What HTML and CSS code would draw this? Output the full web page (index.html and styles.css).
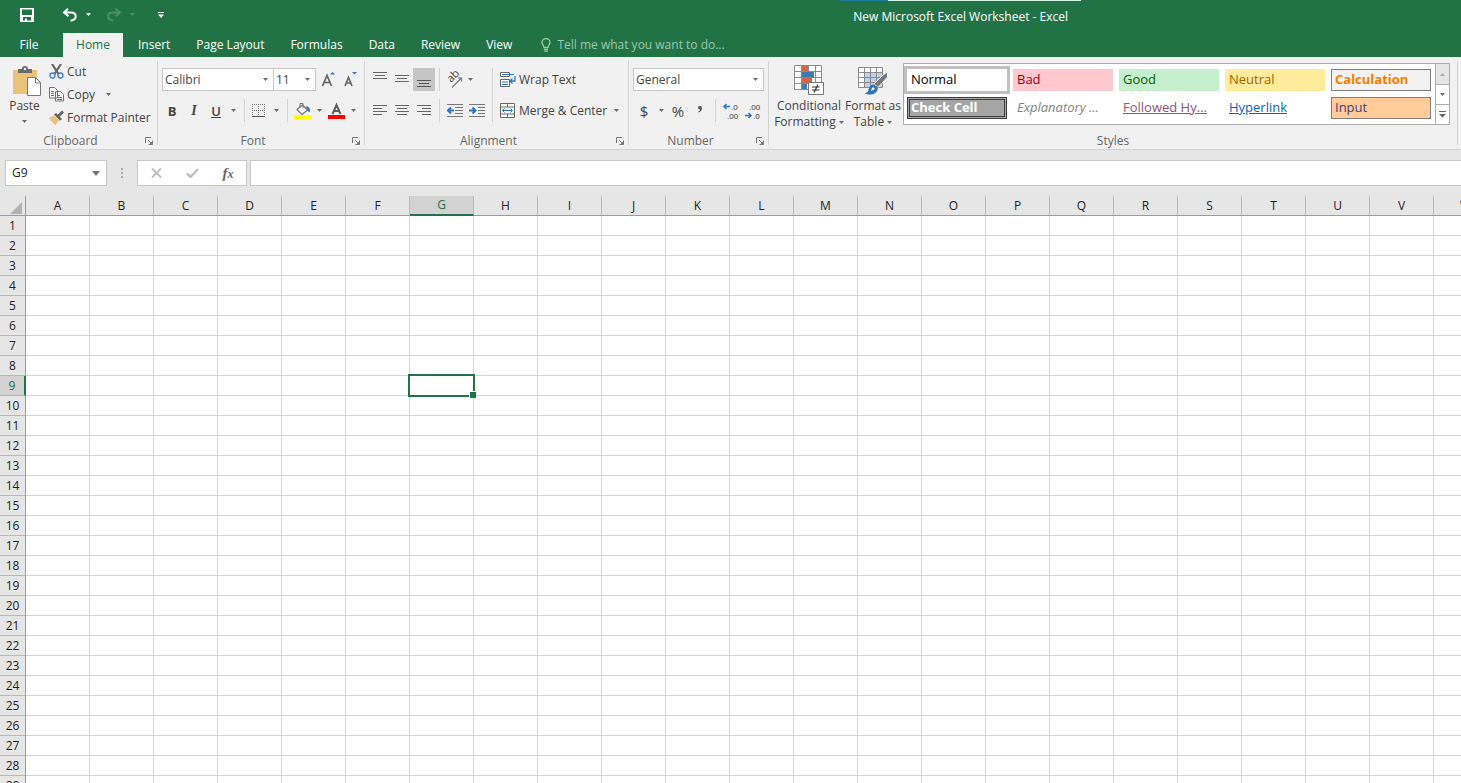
FILE: index.html
```html
<!DOCTYPE html>
<html lang="en">
<head>
<meta charset="utf-8">
<title>New Microsoft Excel Worksheet - Excel</title>
<link rel="stylesheet" href="styles.css">
</head>
<body>
<svg class="defs" aria-hidden="true">
  <symbol id="caret" viewBox="0 0 5 3"><path d="M0 0h5L2.500 3z" fill="currentColor"/></symbol>
  <symbol id="launch" viewBox="0 0 8 8"><path d="M.5 6V.5H6M3 3l4 4M7.500 3.500v4h-4" fill="none" stroke="currentColor"/><path d="M7.500 4v3.500H4z" fill="currentColor"/></symbol>
</svg>

<header class="titlebar">
  <div class="quick">
    <button class="q-save" aria-label="Save"><svg width="14" height="14" viewBox="0 0 14 14"><path fill="#fff" fill-rule="evenodd" d="M0 0h14v14H0zM2 1.500V7h10V1.500zM3 9v3.500h2V10.500h2v2h4V9z"/></svg></button>
    <button class="q-undo" aria-label="Undo"><svg width="16" height="14" viewBox="0 0 16 14"><path d="M6 .8 2 4.500l4.500 3.700M2.500 4.500H9c3 0 4.700 1.700 4.700 4S12 12.200 8.500 12.700" fill="none" stroke="#fff" stroke-width="2"/></svg></button>
    <button class="q-arrow" aria-label="Undo history"><svg width="5" height="3"><use href="#caret"/></svg></button>
    <button class="q-redo" aria-label="Redo" disabled><svg width="16" height="14" viewBox="0 0 16 14"><path d="M9.500.8 14 4.500 9.500 8.200M13.500 4.500H7c-3 0-4.700 1.700-4.700 4s1.700 3.700 5 4.200" fill="none" stroke="currentColor" stroke-width="2"/></svg></button>
    <button class="q-arrow q-dim" aria-label="Redo history" disabled><svg width="5" height="3"><use href="#caret"/></svg></button>
    <button class="q-more" aria-label="Customize toolbar"><svg width="6" height="6" viewBox="0 0 6 6"><path d="M0 0h6v1H0zM0 2.500h6L3 6z" fill="#fff"/></svg></button>
  </div>
  <h1 class="doc-title">New Microsoft Excel Worksheet - Excel</h1>
</header>

<nav class="tabs">
  <button class="tab tab-file">File</button>
  <button class="tab tab-active">Home</button>
  <button class="tab">Insert</button>
  <button class="tab">Page Layout</button>
  <button class="tab">Formulas</button>
  <button class="tab">Data</button>
  <button class="tab">Review</button>
  <button class="tab">View</button>
  <label class="tell">
    <svg width="10" height="14" viewBox="0 0 10 14"><path d="M3 9.500C3 7.500 1 6.800 1 4.500a4 4 0 0 1 8 0C9 6.800 7 7.500 7 9.500zM3 11.500h4M3.500 13.300h3" fill="none" stroke="currentColor" stroke-width="1.300"/></svg>
    <input type="text" placeholder="Tell me what you want to do..." aria-label="Tell me what you want to do">
  </label>
</nav>

<main class="ribbon">
  <section class="group g-clip">
    <div class="body">
      <button class="paste">
        <svg width="30" height="32" viewBox="0 0 30 32"><path d="M1 4h24v24H1z" fill="#eac27c"/><path d="M6 7V3h4a3 3 0 0 1 6 0h4v4z" fill="#6a6a6a"/><circle cx="13" cy="3" r="1.200" fill="#f1f1f1"/><path d="M15.500 11.500h8l5 5v13h-13z" fill="#fff" stroke="#777"/><path d="M23.500 11.500v5.500H28.500" fill="none" stroke="#777"/></svg>
        <span>Paste</span>
        <svg class="car" width="5" height="3"><use href="#caret"/></svg>
      </button>
      <div class="stack">
        <button class="cmd"><svg width="15" height="15" viewBox="0 0 15 15"><path d="M3 0l6.500 10M12 0L5.500 10" stroke="#666" stroke-width="2.200"/><g fill="#f1f1f1" stroke="#3f7fc4" stroke-width="1.300"><circle cx="3.500" cy="11.500" r="2.500"/><circle cx="11.500" cy="11.500" r="2.500"/></g></svg>Cut</button>
        <div class="pair"><button class="cmd"><svg width="15" height="15" viewBox="0 0 15 15"><g fill="#fff" stroke="#707070"><path d="M.5.5h5l3 3v7.500h-8zM6.500 4.500h5l3 3V14h-8z"/></g><path d="M2 4.500h3M2 6.500h3M2 8.500h3M8 8.500h3M8 10.500h5M8 12.500h5" stroke="#3c78a8"/></svg>Copy</button><button class="dd" aria-label="Copy options"><svg width="5" height="3"><use href="#caret"/></svg></button></div>
        <button class="cmd"><svg width="15" height="15" viewBox="0 0 15 15"><path d="M0 8l5-2.500 5 5L6.500 15C4 13.500 2 11 0 8z" fill="#eac27c"/><path d="M5 4.500 7 3l6 6-2 1.800z" fill="#666"/><path d="M9 6.500 14 1.500" stroke="#666" stroke-width="3"/></svg>Format Painter</button>
      </div>
    </div>
    <footer><span>Clipboard</span><button aria-label="Clipboard settings"><svg width="8" height="8"><use href="#launch"/></svg></button></footer>
  </section>

  <section class="group g-font">
    <div class="body col">
      <div class="row">
        <label class="combo c-face"><select aria-label="Font"><option>Calibri</option></select><svg width="5" height="3"><use href="#caret"/></svg></label>
        <label class="combo c-size"><select aria-label="Font size"><option>11</option></select><svg width="5" height="3"><use href="#caret"/></svg></label>
        <button class="ib grow" aria-label="Increase font size"><svg width="16" height="18" viewBox="0 0 16 18"><path d="M1.500 15 6 4.500 10.500 15M3 11.500h6" fill="none" stroke="#666" stroke-width="1.700"/><path d="M9 3.500h5L11.500 1z" fill="#2f75b5"/></svg></button>
        <button class="ib" aria-label="Decrease font size"><svg width="16" height="18" viewBox="0 0 16 18"><path d="M2 15l3.500-8.500L9 15M3.500 12h4.500" fill="none" stroke="#666" stroke-width="1.700"/><path d="M9 1h5l-2.500 2.500z" fill="#2f75b5"/></svg></button>
      </div>
      <div class="row">
        <button class="ib t-bold">B</button><button class="ib t-ital">I</button><button class="ib t-under">U</button><button class="dd" aria-label="Underline options"><svg width="5" height="3"><use href="#caret"/></svg></button>
        <i class="sep"></i>
        <button class="ib" aria-label="Borders"><svg width="14" height="14" viewBox="0 0 14 14"><path d="M.5 0v12M6.500 0v12M12.500 0v12M0 .5h14M0 6.500h14" stroke="#777" stroke-dasharray="1 1"/><path d="M0 12.500h13" stroke="#555"/></svg></button><button class="dd" aria-label="Border options"><svg width="5" height="3"><use href="#caret"/></svg></button>
        <i class="sep"></i>
        <button class="ib" aria-label="Fill color"><svg width="17" height="17" viewBox="0 0 17 17"><path d="M3 7.500 8.500 3l5 5-5.500 4.500z" fill="#fff" stroke="#707070" stroke-width="1.200"/><path d="M6 6V1.500h3V6" fill="none" stroke="#707070"/><path d="M11.500 4.500c3-.5 5 1.500 4.500 5.500l-2-.5-.5-2z" fill="#3c78b4"/><path d="M0 13h17v4H0z" fill="#ff0"/></svg></button><button class="dd" aria-label="Fill options"><svg width="5" height="3"><use href="#caret"/></svg></button>
        <button class="ib" aria-label="Font color"><svg width="17" height="17" viewBox="0 0 17 17"><path d="M4.500 12 8.500 3l4 9M6 9h5" fill="none" stroke="#5c5c5c" stroke-width="2"/><path d="M0 13h17v4H0z" fill="#f00"/></svg></button><button class="dd" aria-label="Font color options"><svg width="5" height="3"><use href="#caret"/></svg></button>
      </div>
    </div>
    <footer><span>Font</span><button aria-label="Font settings"><svg width="8" height="8"><use href="#launch"/></svg></button></footer>
  </section>

  <section class="group g-align">
    <div class="body">
      <div class="col">
        <div class="row">
          <button class="ib" aria-label="Top align"><svg width="14" height="16" viewBox="0 0 14 16"><path d="M0 .5h14M2 3.500h10M0 6.500h14" stroke="#666"/></svg></button><button class="ib" aria-label="Middle align"><svg width="14" height="16" viewBox="0 0 14 16"><path d="M0 3.500h14M2 6.500h10M0 9.500h14" stroke="#666"/></svg></button><button class="ib on" aria-label="Bottom align"><svg width="14" height="16" viewBox="0 0 14 16"><path d="M0 8.500h14M2 11.500h10M0 14.500h14" stroke="#555"/></svg></button>
          <i class="sep"></i>
          <button class="ib" aria-label="Orientation"><svg class="orient" width="18" height="18" viewBox="0 0 18 18"><text transform="translate(5 12) rotate(-45)">ab</text><path d="M6 16.500 15.500 7M12 7h3.500v3.500" fill="none" stroke="#777" stroke-width="1.200"/></svg></button><button class="dd dd-orient" aria-label="Orientation options"><svg width="5" height="3"><use href="#caret"/></svg></button>
        </div>
        <div class="row">
          <button class="ib" aria-label="Align left"><svg width="14" height="11" viewBox="0 0 14 11"><path d="M0 .5h14M0 3.500h9M0 6.500h14M0 9.500h9" stroke="#666"/></svg></button><button class="ib" aria-label="Center"><svg width="14" height="11" viewBox="0 0 14 11"><path d="M0 .5h14M2 3.500h10M0 6.500h14M2 9.500h10" stroke="#666"/></svg></button><button class="ib" aria-label="Align right"><svg width="14" height="11" viewBox="0 0 14 11"><path d="M0 .5h14M5 3.500h9M0 6.500h14M5 9.500h9" stroke="#666"/></svg></button>
          <i class="sep"></i>
          <button class="ib" aria-label="Decrease indent"><svg width="16" height="13" viewBox="0 0 16 13"><path d="M0 .5h16M8 3.500h8M8 6.500h8M8 9.500h8M0 12.500h16" stroke="#777"/><path d="M7 6.500H1M4 3.500l-3 3 3 3" fill="none" stroke="#2f75b5" stroke-width="2"/></svg></button><button class="ib" aria-label="Increase indent"><svg width="16" height="13" viewBox="0 0 16 13"><path d="M0 .5h16M9 3.500h7M9 6.500h7M9 9.500h7M0 12.500h16" stroke="#777"/><path d="M0 6.500h6M3.500 3.500l3 3-3 3" fill="none" stroke="#2f75b5" stroke-width="2"/></svg></button>
        </div>
      </div>
      <i class="sep tall"></i>
      <div class="col">
        <div class="row"><button class="cmd"><svg width="16" height="16" viewBox="0 0 16 16"><path d="M.5.500h9v4h-9zM.5 7.500h9v7h-9z" fill="#fff" stroke="#666"/><path d="M2 2.500h12M2 10h6M2 12.500h6" stroke="#2f75b5"/><path d="M15 4v5h-4.500M12.500 6.500 10 9l2.500 2.500" fill="none" stroke="#2f75b5" stroke-width="1.300"/></svg>Wrap Text</button></div>
        <div class="row"><button class="cmd"><svg width="16" height="16" viewBox="0 0 16 16"><path d="M.5.5h14v14H.5zM.5 4h14M.5 11h14M7.500.5V4M7.500 11v3.500" fill="#fff" stroke="#666"/><path d="M2.500 7.500h10M4.500 5.500l-2 2 2 2M10.500 5.500l2 2-2 2" fill="none" stroke="#2f75b5"/></svg>Merge &amp; Center</button><button class="dd dd-merge" aria-label="Merge options"><svg width="5" height="3"><use href="#caret"/></svg></button></div>
      </div>
    </div>
    <footer><span>Alignment</span><button aria-label="Alignment settings"><svg width="8" height="8"><use href="#launch"/></svg></button></footer>
  </section>

  <section class="group g-num">
    <div class="body col">
      <div class="row"><label class="combo c-num"><select aria-label="Number format"><option>General</option></select><svg width="5" height="3"><use href="#caret"/></svg></label></div>
      <div class="row">
        <button class="ib t-sym">$</button><button class="dd" aria-label="Currency options"><svg width="5" height="3"><use href="#caret"/></svg></button><button class="ib t-sym">%</button><button class="ib" aria-label="Comma style"><svg width="6" height="11" viewBox="0 0 6 11"><path d="M3 1a2 2 0 0 1 2 2c0 2-1 3.500-3.500 4.500L1 7c1.500-1 2-1.500 2-2.500C.5 4.500.5 1 3 1z" fill="#555"/></svg></button>
        <i class="sep"></i>
        <button class="ib" aria-label="Increase decimal"><svg width="16" height="18" viewBox="0 0 16 18" class="dec"><text x="8" y="8">.0</text><text x="4" y="17">.00</text><path d="M7 4.500H1M3.500 2 1 4.500 3.500 7" fill="none" stroke="#2f75b5" stroke-width="1.500"/></svg></button><button class="ib" aria-label="Decrease decimal"><svg width="16" height="18" viewBox="0 0 16 18" class="dec"><text x="4" y="8">.00</text><text x="8" y="17">.0</text><path d="M0 13.500h6M3.500 11 6 13.500 3.500 16" fill="none" stroke="#2f75b5" stroke-width="1.500"/></svg></button>
      </div>
    </div>
    <footer><span>Number</span><button aria-label="Number settings"><svg width="8" height="8"><use href="#launch"/></svg></button></footer>
  </section>

  <section class="group g-style">
    <div class="body">
      <button class="big big-cond">
        <svg width="30" height="31" viewBox="0 0 30 31"><path d="M.5.5h27v24H.5z" fill="#fff"/><path d="M8 1h6v5H8zM8 13h10v5H8z" fill="#d4644a"/><path d="M8 7h12v5H8zM8 19h5v5H8z" fill="#3f7ab0"/><path d="M.5.500h27v24H.5zM7.500.5v24M21.500.5v24M.5 6.500h27M.5 12.500h27M.5 18.500h27M14.500.5v6" fill="none" stroke="#8a8a8a"/><path d="M14.500 17.500h15v12h-15z" fill="#fff" stroke="#777"/><path d="M18 22h7.500M18 25h7.500M24 19.500l-4 8" stroke="#333" stroke-width="1.200"/></svg>
        <span>Conditional<br>Formatting <svg width="5" height="3"><use href="#caret"/></svg></span>
      </button>
      <button class="big big-tab">
        <svg width="30" height="31" viewBox="0 0 30 31"><path d="M.5 2.500h24v20H.5z" fill="#fff"/><path d="M7 8h17.500v14.500H7z" fill="#bdd2ea"/><path d="M.5 2.500h24v20H.5zM6.500 2.500v20M12.500 2.500v20M18.500 2.500v20M.5 7.500h24M.5 12.500h24M.5 17.500h24" fill="none" stroke="#8a8a8a"/><path d="M29.500 7v5L20 22.500l-4-3.500 9-9z" fill="#777" stroke="#f1f1f1"/><path d="M16 19.500c-4 0-5 3-5.500 5.500-.5 2-2 3-4 3.500 5 2 13 1.500 13.500-6z" fill="#2f75b5"/><path d="M15 22c-1.500 1-1.500 3-2 4l4-2z" fill="#fff"/></svg>
        <span>Format as<br>Table <svg width="5" height="3"><use href="#caret"/></svg></span>
      </button>
      <div class="gallery">
        <div class="tiles">
          <button class="tile s-normal">Normal</button>
          <button class="tile s-bad">Bad</button>
          <button class="tile s-good">Good</button>
          <button class="tile s-neutral">Neutral</button>
          <button class="tile s-calc">Calculation</button>
          <button class="tile s-check">Check Cell</button>
          <button class="tile s-expl">Explanatory ...</button>
          <button class="tile s-fol">Followed Hy...</button>
          <button class="tile s-link">Hyperlink</button>
          <button class="tile s-input">Input</button>
        </div>
        <div class="scroll">
          <button class="s-up" aria-label="Scroll up" disabled><svg width="5" height="3" viewBox="0 0 5 3"><path d="M0 3h5L2.500 0z" fill="#aaa"/></svg></button>
          <button aria-label="Scroll down"><svg width="5" height="3"><use href="#caret"/></svg></button>
          <button aria-label="More styles"><svg width="7" height="7" viewBox="0 0 7 7"><path d="M0 0h7v1H0zM0 3h7L3.500 6.500z" fill="#666"/></svg></button>
        </div>
      </div>
    </div>
    <footer><span>Styles</span></footer>
  </section>
</main>

<div class="formula">
  <label class="name"><input type="text" value="G9" aria-label="Name box"><svg width="8" height="5" viewBox="0 0 8 5"><path d="M0 0h8L4 5z" fill="#777"/></svg></label>
  <svg class="grip" width="2" height="11" viewBox="0 0 2 11"><path d="M0 0h2v2H0zM0 4h2v2H0zM0 8h2v2H0z" fill="#aaa"/></svg>
  <div class="fx">
    <button aria-label="Cancel"><svg width="11" height="10" viewBox="0 0 11 10"><path d="M1 .5l9 9M10 .5l-9 9" stroke="#bcbcbc" stroke-width="1.800"/></svg></button>
    <button aria-label="Enter"><svg width="13" height="10" viewBox="0 0 13 10"><path d="M1 5.500 4.500 9 12 1" fill="none" stroke="#bcbcbc" stroke-width="2.300"/></svg></button>
    <button class="fn" aria-label="Insert function"><i>f</i><i class="fn-x">x</i></button>
  </div>
  <input class="bar" type="text" aria-label="Formula bar">
</div>

<div class="sheet">
  <table>
    <thead><tr id="cols"><th class="corner"><svg width="12" height="12" viewBox="0 0 12 12"><path d="M12 0v12H0z" fill="#b2b2b2"/></svg></th></tr></thead>
    <tbody id="rows"></tbody>
  </table>
</div>
<script src="sheet.js"></script>
</body>
</html>
```
FILE: styles.css
```css
* { box-sizing: border-box; }
html, body { height: 100%; }
body {
  margin: 0;
  display: flex;
  flex-direction: column;
  overflow: hidden;
  background: #e6e6e6;
  color: #444;
  font: 12px/16px "Open Sans", "Noto Sans", sans-serif;
}
button, input, select { font: inherit; color: inherit; margin: 0; padding: 0; border: 0; background: none; border-radius: 0; }
button { display: inline-flex; align-items: center; justify-content: center; white-space: nowrap; }
svg { display: block; flex: none; }
.defs { display: none; }
use { color: #6a6a6a; }

.titlebar { display: flex; height: 33px; flex: none; background: #217346; color: #fff; }
.quick { display: flex; align-items: center; height: 29px; padding-left: 20px; }
.q-undo { margin-left: 28px; }
.q-arrow { width: 20px; }
.q-arrow use, .q-more use { color: #fff; }
.q-redo { margin-left: 8px; color: #4c8f6b; }
.q-arrow.q-dim use { color: #4c8f6b; }
.q-more { margin-left: 16px; }
.doc-title {
  width: 241px;
  margin: 0 26% 0 auto;
  padding-top: 8px;
  border-top: 1px solid;
  border-image: linear-gradient(90deg, #1a7fa0 20%, #d5f5e4 20%) 1;
  font-size: 12px;
  font-weight: 400;
  line-height: 16px;
  text-align: center;
  white-space: nowrap;
}

.tabs { display: flex; flex: none; height: 24px; background: #217346; color: #fff; }
.tab { padding: 0 13px; }
.tab-file { width: 58px; margin-right: 5px; }
.tab-active { width: 60px; margin-right: 2px; padding: 0; background: #f1f1f1; color: #217346; }
.tell { display: flex; align-items: center; gap: 6px; margin-left: 16px; color: #9cc8ae; }
.tell input { width: 190px; outline: 0; }
.tell input::placeholder { color: #9cc8ae; opacity: 1; }

.ribbon { display: flex; flex: none; height: 93px; background: #f1f1f1; border-bottom: 1px solid #d2d2d2; }
.group { display: flex; flex-direction: column; flex: none; margin: 4px 0; border-right: 1px solid #d2d2d2; }
.g-clip { width: 158px; }
.g-font { width: 207px; }
.g-align { width: 264px; }
.g-num { width: 140px; }
.g-style { flex: 1 1 auto; margin-right: 3px; }
.body { display: flex; flex: 1; }
.col { display: flex; flex-direction: column; gap: 8px; padding-top: 7px; }
.row { display: flex; align-items: center; height: 23px; }
.group footer { display: flex; align-items: center; flex: none; height: 16px; margin-bottom: -4px; color: #666; }
.group footer span { flex: 1; text-align: center; }
.group footer button { width: 16px; height: 16px; }
.group footer use { color: #777; }

.paste { flex-direction: column; justify-content: flex-start; width: 49px; padding-top: 5px; }
.paste svg:first-child { margin-left: 4px; }
.paste .car { margin-top: 6px; }
.stack { display: flex; flex-direction: column; align-items: flex-start; margin-top: -1px; }
.stack button { height: 23px; }
.pair { display: flex; }
.cmd { gap: 3px; }
.stack .dd { margin-left: 7px; }
.ib { width: 22px; height: 23px; }
.dd { width: 12px; height: 23px; }
.dd-merge { margin-left: 3px; }
.on { background: #c5c5c5; }
.sep { width: 1px; height: 23px; margin: 0 4px; background: #d2d2d2; }
.sep.tall { height: 54px; margin: 7px 7px 0 4px; }
.g-font .body { padding-left: 3px; }
.g-font .sep { margin: 0 3px 0 5px; }
.g-align .body { padding-left: 4px; }
.g-align .col:first-child { width: 119px; }
.g-num .body { padding-left: 4px; }
.t-bold { font-weight: 700; font-size: 13px; }
.t-ital { font: italic 700 14px "Liberation Serif", serif; }
.t-under { font-weight: 600; font-size: 13px; text-decoration: underline; }
.t-sym { font-size: 15px; }
.orient { overflow: visible; font-size: 11px; fill: #444; }
.dd-orient { margin-left: -2px; }
.dec { overflow: visible; font: 8px "Liberation Sans", sans-serif; fill: #333; }
.combo { display: grid; align-items: center; height: 23px; border: 1px solid #c6c6c6; background: #fff; }
.combo select, .combo svg { grid-area: 1 / 1; }
.combo select { appearance: none; height: 21px; padding-left: 2px; outline: 0; }
.combo svg { justify-self: end; margin-right: 5px; pointer-events: none; }
.c-face { width: 112px; margin-left: 1px; }
.c-size { width: 43px; margin-left: -1px; }
.c-num { width: 131px; }
.grow { margin-left: 2px; }

.big { flex-direction: column; justify-content: flex-start; padding-top: 4px; gap: 2px; }
.big-cond { width: 68px; margin-left: 6px; }
.big-tab { width: 60px; }
.big span svg { display: inline-block; vertical-align: middle; }
.gallery { display: flex; flex: 1; height: 62px; margin: 2px 7px 0 0; border: 1px solid #ababab; background: #fff; }
.tiles { display: grid; flex: 1; grid-template-columns: repeat(5, 1fr); gap: 6px; padding: 5px 4px 5px 3px; }
.tile { justify-content: flex-start; height: 22px; padding: 0 0 2px 4px; font-size: 13px; min-width: 0; }
.s-normal { outline: 3px solid #c0c0c0; color: #000; }
.s-bad { background: #ffc7ce; color: #9c0006; }
.s-good { background: #c6efce; color: #006100; }
.s-neutral { background: #ffeb9c; color: #9c6500; }
.s-calc { background: #f2f2f2; border: 1px solid #7f7f7f; color: #fa7d00; font-weight: 700; padding-left: 3px; }
.s-check { background: #a5a5a5; border: 3px double #3f3f3f; color: #fff; font-weight: 700; padding-left: 1px; }
.s-expl { color: #7f7f7f; font-style: italic; }
.s-fol { color: #954f72; text-decoration: underline; }
.s-link { color: #0563c1; text-decoration: underline; }
.s-input { background: #ffcc99; border: 1px solid #7f7f7f; color: #3f3f76; padding-left: 3px; }
.scroll { display: grid; width: 14px; grid-template-rows: 1fr 1fr 1fr; border-left: 1px solid #ababab; }
.scroll button + button { border-top: 1px solid #ababab; }
.s-up { background: #e6e6e6; }

.formula { display: flex; align-items: center; flex: none; height: 46px; padding: 0 0 0 5px; }
.name { display: flex; align-items: center; width: 102px; height: 26px; padding: 0 6px; border: 1px solid #c6c6c6; background: #fff; color: #222; }
.name input { flex: 1; min-width: 0; outline: 0; }
.grip { margin: 0 14px; }
.fx { display: flex; width: 110px; height: 26px; border: 1px solid #c6c6c6; background: #fff; }
.fx button { flex: 1; }
.fn { color: #666; font: italic 700 15px "Liberation Serif", serif; }
.fn-x { font-size: 12px; padding-top: 3px; }
.bar { flex: 1; min-width: 0; height: 26px; margin-left: 3px; padding: 0 6px; border: 1px solid #c6c6c6; border-right: 0; background: #fff; outline: 0; }

.sheet { flex: 1; min-height: 0; overflow: hidden; background: #fff; }
table { width: 1498px; table-layout: fixed; border-collapse: separate; border-spacing: 0; }
th, td { height: 20px; padding: 0; border-right: 1px solid #d4d4d4; border-bottom: 1px solid #d4d4d4; line-height: 18px; }
th { width: 64px; background: #e6e6e6; color: #222; font-weight: 400; text-align: center; }
thead th { border-right-color: #b8b8b8; border-bottom-color: #9b9b9b; }
th.corner, tbody th { width: 26px; border-right-color: #9b9b9b; }
tbody th { padding-top: 1px; border-bottom-color: #b8b8b8; }
th.corner svg { margin: 4px 0 0 10px; }
thead th.picked { background: #d2d2d2; color: #217346; border-bottom: 2px solid #217346; }
tbody th.picked { background: #d2d2d2; color: #217346; border-right: 2px solid #217346; }
td.active { position: relative; }
td.active::before { content: ""; position: absolute; inset: -2px; border: 2px solid #217346; }
td.active::after { content: ""; position: absolute; right: -3px; bottom: -3px; width: 6px; height: 6px; background: #217346; border: 1px solid #fff; border-width: 1px 0 0 1px; }
```
FILE: sheet.js
```js
const letters = "ABCDEFGHIJKLMNOPQRSTUVW".split("");
const activeCol = "G";
const activeRow = 9;
const rowHeight = 20;

for (const name of letters) {
  const th = document.createElement("th");
  th.textContent = name;
  if (name === activeCol) th.className = "picked";
  document.getElementById("cols").append(th);
}

const visible = Math.ceil(document.querySelector(".sheet").clientHeight / rowHeight) - 1;
for (let r = 1; r <= visible; r++) {
  const tr = document.createElement("tr");
  const th = document.createElement("th");
  th.textContent = r;
  if (r === activeRow) th.className = "picked";
  tr.append(th);
  for (const name of letters) {
    const td = document.createElement("td");
    if (r === activeRow && name === activeCol) td.className = "active";
    tr.append(td);
  }
  document.getElementById("rows").append(tr);
}
```
